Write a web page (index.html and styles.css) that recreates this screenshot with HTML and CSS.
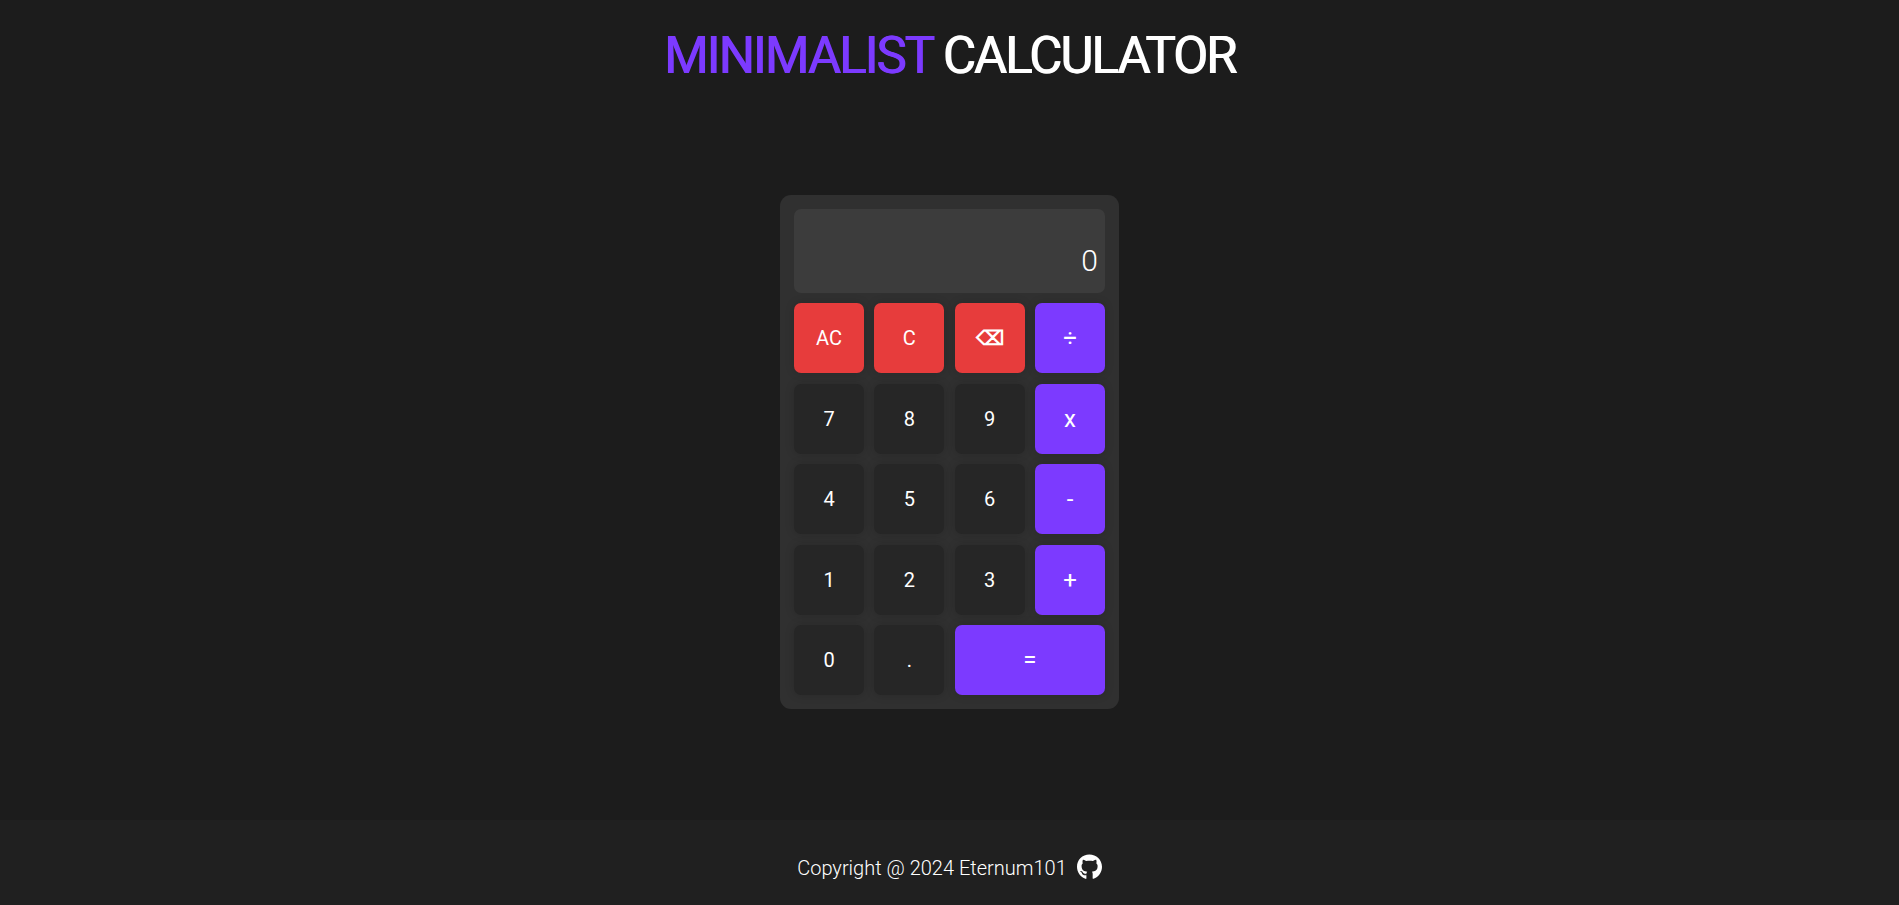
FILE: index.html
```html
<!DOCTYPE html>
<html lang="en">
<head>
<meta charset="utf-8">
<meta name="viewport" content="width=device-width, initial-scale=1">
<title>Minimalist Calculator</title>
<link rel="stylesheet" href="styles.css">
</head>
<body>
<header class="header">
  <h1 class="title"><span class="accent">MINIMALIST</span> CALCULATOR</h1>
</header>
<main class="main">
  <section class="calculator" aria-label="Calculator">
    <output class="display">0</output>
    <button class="key clear">AC</button>
    <button class="key clear">C</button>
    <button class="key clear delete" aria-label="Delete">⌫</button>
    <button class="key operator">÷</button>
    <button class="key">7</button>
    <button class="key">8</button>
    <button class="key">9</button>
    <button class="key operator">x</button>
    <button class="key">4</button>
    <button class="key">5</button>
    <button class="key">6</button>
    <button class="key operator">-</button>
    <button class="key">1</button>
    <button class="key">2</button>
    <button class="key">3</button>
    <button class="key operator">+</button>
    <button class="key">0</button>
    <button class="key">.</button>
    <button class="key operator equals">=</button>
  </section>
</main>
<footer class="footer">
  <p class="copyright">Copyright @ 2024 Eternum101</p>
  <a class="github" href="#" aria-label="GitHub">
    <svg class="github-icon" viewBox="0 0 496 512" aria-hidden="true"><path fill="currentColor" d="M165.900 397.400c0 2-2.300 3.600-5.200 3.600-3.300.3-5.600-1.300-5.600-3.600 0-2 2.300-3.600 5.200-3.600 3-.3 5.600 1.300 5.600 3.600zm-31.100-4.500c-.7 2 1.300 4.300 4.300 4.900 2.600 1 5.600 0 6.200-2s-1.300-4.300-4.300-5.200c-2.600-.7-5.500.3-6.200 2.300zm44.200-1.700c-2.900.7-4.900 2.600-4.600 4.900.3 2 2.900 3.300 5.900 2.600 2.900-.7 4.900-2.600 4.600-4.600-.3-1.900-3-3.200-5.900-2.900zM244.800 8C106.100 8 0 113.300 0 252c0 110.900 69.800 205.800 169.500 239.200 12.800 2.300 17.300-5.600 17.300-12.100 0-6.200-.3-40.400-.3-61.400 0 0-70 15-84.700-29.800 0 0-11.400-29.100-27.800-36.600 0 0-22.900-15.700 1.600-15.400 0 0 24.900 2 38.600 25.800 21.900 38.600 58.600 27.500 72.900 20.900 2.300-16 8.800-27.100 16-33.700-55.900-6.200-112.300-14.300-112.300-110.500 0-27.500 7.600-41.300 23.600-58.900-2.600-6.500-11.100-33.300 2.600-67.900 20.900-6.500 69 27 69 27 20-5.600 41.500-8.500 62.800-8.500s42.800 2.900 62.800 8.500c0 0 48.100-33.600 69-27 13.700 34.700 5.200 61.400 2.600 67.900 16 17.700 25.800 31.500 25.800 58.900 0 96.500-58.900 104.200-114.800 110.500 9.200 7.900 17 22.900 17 46.400 0 33.700-.3 75.400-.3 83.600 0 6.500 4.600 14.400 17.300 12.100C428.200 457.800 496 362.900 496 252 496 113.300 383.500 8 244.800 8z"/></svg>
  </a>
</footer>
</body>
</html>
```
FILE: styles.css
```css
* {
  box-sizing: border-box;
  margin: 0;
  padding: 0;
}

body {
  display: flex;
  flex-direction: column;
  min-height: 100vh;
  background: #1c1c1c;
  color: #fff;
  font-family: Roboto, "Liberation Sans", sans-serif;
  font-weight: 300;
}

.header {
  padding-top: 28px;
  text-align: center;
}

.title {
  font-size: 51px;
  font-weight: 400;
  line-height: 56px;
  letter-spacing: -2px;
  text-shadow: 1px 0 currentColor;
}

.accent {
  color: #7c3aff;
  text-shadow: 1px 0 currentColor;
}

.main {
  flex: 1;
  display: flex;
  align-items: center;
  justify-content: center;
  padding: 24px;
}

.calculator {
  display: grid;
  grid-template-columns: repeat(4, 70px);
  grid-template-rows: 84px repeat(5, 70px);
  place-content: space-between;
  width: 339px;
  height: 514px;
  padding: 14px;
  border-radius: 11px;
  background: #303030;
}

.display {
  grid-column: 1 / -1;
  display: flex;
  align-items: flex-end;
  justify-content: flex-end;
  padding: 14px 7px;
  border-radius: 7px;
  background: #3c3c3c;
  font-size: 30px;
  line-height: 36px;
}

.key {
  border: 0;
  border-radius: 7px;
  background: #262626;
  box-shadow: 0 0 10px rgba(0, 0, 0, 0.16);
  color: #fff;
  font-family: inherit;
  font-size: 20px;
  font-weight: 400;
  cursor: pointer;
}

.clear {
  background: #e73c3c;
}

.delete {
  font-weight: 700;
}

.operator {
  background: #7c3aff;
  font-size: 24px;
}

.equals {
  grid-column: span 2;
}

.footer {
  display: flex;
  align-items: center;
  justify-content: center;
  gap: 10px;
  padding: 28px 0 17px;
  background: #202020;
}

.copyright {
  font-size: 20px;
  line-height: 40px;
}

.github {
  display: flex;
  padding-bottom: 2px;
  color: #fff;
}

.github-icon {
  width: 25px;
  height: 26px;
}
```
